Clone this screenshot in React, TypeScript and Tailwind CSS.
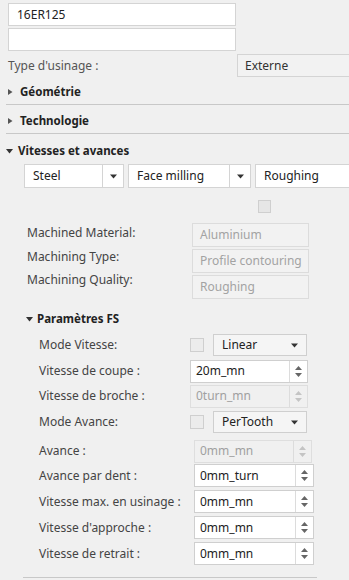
import React from "react";

const font = { fontFamily: '"Noto Sans", "Open Sans", sans-serif' };

function TriRight() {
  return (
    <svg width="7" height="8" viewBox="0 0 7 8" className="shrink-0">
      <path d="M1 1 L5.5 4 L1 7 Z" fill="#555" />
    </svg>
  );
}
function TriDown() {
  return (
    <svg width="7" height="8" viewBox="0 0 7 8" className="shrink-0">
      <path d="M0 2 L7 2 L3.5 6.5 Z" fill="#333" />
    </svg>
  );
}
function SelArrow() {
  return (
    <svg width="7" height="5" viewBox="0 0 7 5">
      <path d="M0 0.5 L7 0.5 L3.5 4.5 Z" fill="#333" />
    </svg>
  );
}
function Spin({ disabled }: { disabled?: boolean }) {
  const c = disabled ? "#c4c4c4" : "#666";
  return (
    <div className="w-[18px] flex flex-col items-center justify-center gap-[3px] border-l border-[#dcdcdc] h-full shrink-0">
      <svg width="7" height="4" viewBox="0 0 7 4">
        <path d="M0 4 L7 4 L3.5 0 Z" fill={c} />
      </svg>
      <svg width="7" height="4" viewBox="0 0 7 4">
        <path d="M0 0 L7 0 L3.5 4 Z" fill={c} />
      </svg>
    </div>
  );
}

function Header({ open, label, gap = 6 }: { open?: boolean; label: string; gap?: number }) {
  return (
    <div className="flex items-center text-[11.5px] font-bold text-[#222] whitespace-nowrap" style={{ gap }}>
      {open ? <TriDown /> : <TriRight />}
      <span>{label}</span>
    </div>
  );
}

function Select({ w, label }: { w: number; label: string }) {
  return (
    <div className="h-[24px] flex bg-white border border-[#d4d4d4] shrink-0" style={{ width: w }}>
      <div className="flex-1 flex items-center pl-[8px] text-[12px] text-[#222]">{label}</div>
      <div className="w-[21px] border-l border-[#d4d4d4] flex items-center justify-center">
        <SelArrow />
      </div>
    </div>
  );
}

function SmallSelect({ label }: { label: string }) {
  return (
    <div className="h-[22px] w-[94px] flex items-center justify-between bg-[#f5f5f5] border border-[#cfcfcf] px-[8px] text-[12px] text-[#222] shrink-0">
      <span>{label}</span>
      <SelArrow />
    </div>
  );
}

function Check() {
  return <div className="w-[14px] h-[14px] border border-[#cfcfcf] bg-[#ececec] shrink-0" />;
}

function NumInput({ value, disabled, w = 117 }: { value: string; disabled?: boolean; w?: number }) {
  return (
    <div
      className={
        "h-[23px] flex border shrink-0 " +
        (disabled ? "bg-[#f0f0f0] border-[#dedede] text-[#a0a0a0]" : "bg-white border-[#cfcfcf] text-[#222]")
      }
      style={{ width: w }}
    >
      <div className="flex-1 flex items-center pl-[5px] text-[12px]">{value}</div>
      <Spin disabled={disabled} />
    </div>
  );
}

function FsRow({ label, children, h = 23, mt = 3 }: { label: string; children: React.ReactNode; h?: number; mt?: number }) {
  return (
    <div className="flex items-center" style={{ height: h, marginTop: mt }}>
      <div className="w-[190px] shrink-0 pl-[39px] text-[12px] text-[#444] whitespace-nowrap">{label}</div>
      {children}
    </div>
  );
}

export default function App() {
  return (
    <div className="w-[349px] h-[580px] overflow-hidden bg-[#f0f0f0]" style={font}>
      <div className="pt-[3px] pl-[8px]">
        <div className="w-[228px] h-[23px] bg-white border border-[#d4d4d4] flex items-center pl-[8px] text-[12px] text-[#222]">
          16ER125
        </div>
        <div className="mt-[2px] w-[228px] h-[23px] bg-white border border-[#d4d4d4]" />
      </div>
      <div className="mt-[3px] flex items-center pl-[8px] h-[23px]">
        <div className="w-[229px] shrink-0 text-[12px] text-[#555]">Type d'usinage :</div>
        <div className="w-[140px] h-[23px] border border-[#d4d4d4] bg-[#f2f2f2] flex items-center pl-[7px] text-[12px] text-[#333] shrink-0">
          Externe
        </div>
      </div>

      <div className="ml-[6px] h-[28px] pt-[3px] flex items-center border-b border-[#c8c8c8]">
        <div className="pl-[1px]">
          <Header label="Géométrie" />
        </div>
      </div>
      <div className="ml-[6px] h-[29px] pt-[4px] flex items-center border-b border-[#c8c8c8]">
        <div className="pl-[1px]">
          <Header label="Technologie" />
        </div>
      </div>

      <div className="ml-[6px] h-[30px] pt-[3px] flex items-center">
        <Header open label="Vitesses et avances" gap={5} />
      </div>

      <div className="flex gap-[4px] pl-[24px]">
        <Select w={100} label="Steel" />
        <Select w={123} label="Face milling" />
        <Select w={120} label="Roughing" />
      </div>

      <div className="pl-[258px] mt-[12px]">
        <div className="w-[13px] h-[13px] border border-[#cfcfcf] bg-[#e6e6e6]" />
      </div>

      <div className="mt-[10px] flex flex-col gap-[2px]">
        {[
          ["Machined Material:", "Aluminium", 0],
          ["Machining Type:", "Profile contouring", -2],
          ["Machining Quality:", "Roughing", -5],
        ].map(([l, v, o]) => (
          <div key={l as string} className="flex items-start h-[24px]">
            <div className="w-[192px] shrink-0 pl-[27px] text-[12px] text-[#444] leading-[20px]" style={{ marginTop: o as number }}>
              {l}
            </div>
            <div className="w-[117px] h-[24px] shrink-0 border border-[#dcdcdc] bg-[#f2f2f2] flex items-center pl-[7px] text-[12px] text-[#a3a3a3]">
              {v}
            </div>
          </div>
        ))}
      </div>

      <div className="mt-[11px] h-[18px] flex items-center pl-[26px]">
        <Header open label="Paramètres FS" gap={4} />
      </div>

      <FsRow label="Mode Vitesse:" h={22} mt={6}>
        <div className="flex items-center gap-[9px]">
          <Check />
          <SmallSelect label="Linear" />
        </div>
      </FsRow>
      <FsRow label="Vitesse de coupe :" mt={4} h={22}>
        <NumInput value="20m_mn" w={118} />
      </FsRow>
      <FsRow label="Vitesse de broche :" mt={3} h={22}>
        <NumInput value="0turn_mn" disabled w={118} />
      </FsRow>
      <FsRow label="Mode Avance:" mt={4} h={22}>
        <div className="flex items-center gap-[9px]">
          <Check />
          <SmallSelect label="PerTooth" />
        </div>
      </FsRow>
      <FsRow label="Avance :" mt={7} h={22}>
        <div className="ml-[4px]">
          <NumInput value="0mm_mn" disabled w={118} />
        </div>
      </FsRow>
      {[
        ["Avance par dent :", "0mm_turn"],
        ["Vitesse max. en usinage :", "0mm_mn"],
        ["Vitesse d'approche :", "0mm_mn"],
        ["Vitesse de retrait :", "0mm_mn"],
      ].map(([l, v], i) => (
        <FsRow key={l} label={l} mt={i === 0 ? 2 : 3} h={23}>
          <div className="ml-[4px]">
            <NumInput value={v} w={120} />
          </div>
        </FsRow>
      ))}
      <div className="ml-[23px] w-[294px] mt-[12px] border-b border-[#c8c8c8]" />
    </div>
  );
}
